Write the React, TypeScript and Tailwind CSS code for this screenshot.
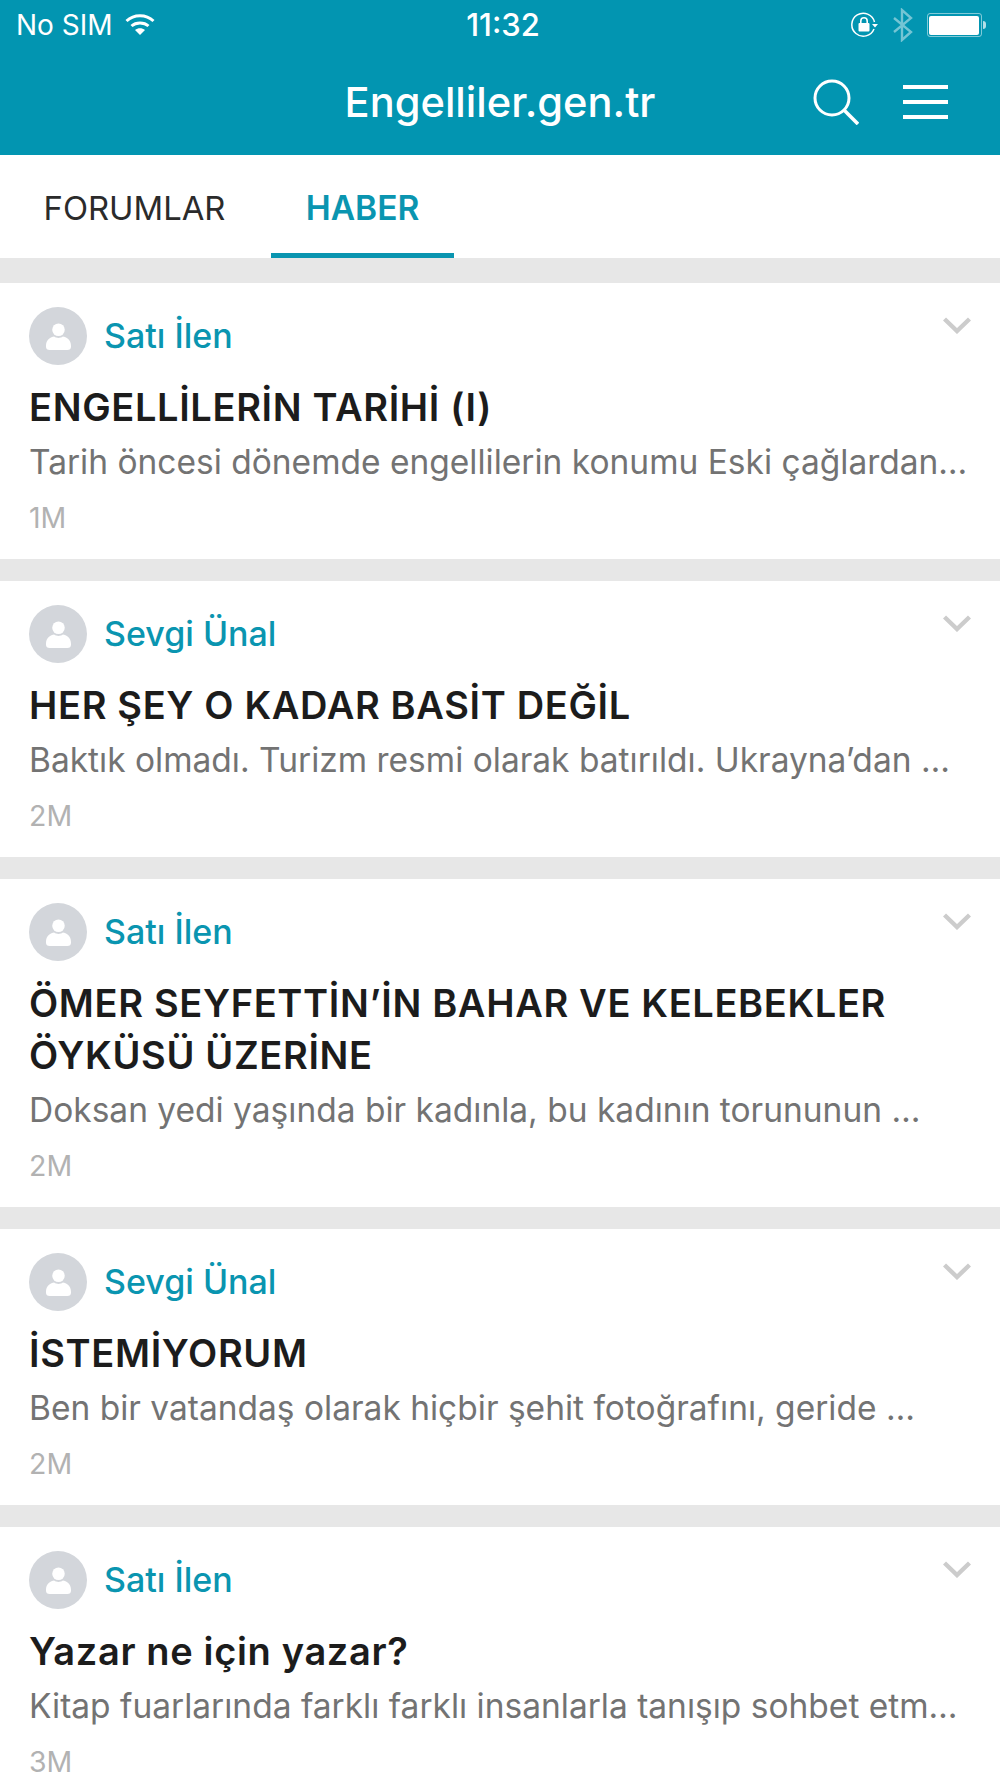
const posts = [
  { author: 'Satı İlen', title: ['ENGELLİLERİN TARİHİ (I)'], preview: 'Tarih öncesi dönemde engellilerin konumu Eski çağlardan…', time: '1M' },
  { author: 'Sevgi Ünal', title: ['HER ŞEY O KADAR BASİT DEĞİL'], preview: 'Baktık olmadı. Turizm resmi olarak batırıldı. Ukrayna’dan …', time: '2M' },
  { author: 'Satı İlen', title: ['ÖMER SEYFETTİN’İN BAHAR VE KELEBEKLER', 'ÖYKÜSÜ ÜZERİNE'], preview: 'Doksan yedi yaşında bir kadınla, bu kadının torununun …', time: '2M' },
  { author: 'Sevgi Ünal', title: ['İSTEMİYORUM'], preview: 'Ben bir vatandaş olarak hiçbir şehit fotoğrafını, geride …', time: '2M' },
  { author: 'Satı İlen', title: ['Yazar ne için yazar?'], preview: 'Kitap fuarlarında farklı farklı insanlarla tanışıp sohbet etm…', time: '3M' },
]

function Wifi() {
  return (
    <svg width="30" height="24" viewBox="0 0 30 24" fill="none" stroke="white" strokeWidth="3">
      <path d="M1.5 8 C9 1 21 1 28.5 8" />
      <path d="M6.5 13 C11 9 19 9 23.5 13" />
      <path d="M10 17 L15 22 L20 17 C17 14.5 13 14.5 10 17Z" fill="white" stroke="none" />
    </svg>
  )
}

function RotationLock() {
  return (
    <svg width="28" height="26" viewBox="0 0 28 26" fill="none" stroke="white">
      <path d="M23 17 A11.5 11.5 0 1 1 23.5 10" strokeWidth="1.5" />
      <path d="M21 12 L27 12 L24 15.5Z" fill="white" stroke="none" />
      <rect x="7.5" y="11" width="11" height="8.5" rx="1" fill="white" stroke="none" />
      <path d="M9.8 11 V9 a3.2 3.2 0 0 1 6.4 0 V11" strokeWidth="1.6" />
    </svg>
  )
}

function Bluetooth() {
  return (
    <svg width="20" height="34" viewBox="0 0 20 34" fill="none" stroke="white" strokeOpacity="0.45" strokeWidth="2.4">
      <path d="M1 10 L18 24 L9 32 V2 L18 10 L1 24" />
    </svg>
  )
}

function Battery() {
  return (
    <div className="flex items-center">
      <div className="w-[55px] h-[24px] rounded-[3px] border border-white/50 p-[1.5px]">
        <div className="w-full h-full bg-white rounded-[2px]" />
      </div>
      <div className="w-[3px] h-[8px] bg-white/70 rounded-r-sm ml-[1px]" />
    </div>
  )
}

function Avatar() {
  return (
    <div className="w-[58px] h-[58px] rounded-full bg-[#d3d6db] flex items-center justify-center">
      <svg width="27" height="29" viewBox="0 0 28 30" fill="white">
        <circle cx="14" cy="8" r="6.5" />
        <path d="M1 25 C1 18 6 15.5 9.5 15 C12 17 16 17 18.5 15 C22 15.5 27 18 27 25 Q27 29 23 29 H5 Q1 29 1 25Z" />
      </svg>
    </div>
  )
}

function PostCard({ post }: { post: (typeof posts)[number] }) {
  return (
    <article className="relative bg-white pl-[29px] pt-[24px] pb-[25px] mb-[22px]">
      <div className="flex items-center gap-[17px]">
        <Avatar />
        <span className="text-[34px] leading-[40px] font-medium text-[#0a95b0]">{post.author}</span>
      </div>
      <svg className="absolute right-[29px] top-[34px]" width="28" height="17" viewBox="0 0 28 17" fill="none" stroke="#cccccc" strokeWidth="4.4">
        <path d="M1.5 2 L14 14 L26.5 2" />
      </svg>
      <h2 className="mt-[16px] text-[38px] tracking-[0.65px] leading-[52px] font-semibold text-[#1c1c1c] whitespace-nowrap">
        {post.title.map((line) => (
          <div key={line}>{line}</div>
        ))}
      </h2>
      <p className="mt-[9px] text-[33.5px] leading-[40px] text-[#737373] whitespace-nowrap">{post.preview}</p>
      <div className="mt-[20px] text-[28.5px] leading-[32px] text-[#b2b2b2]">{post.time}</div>
    </article>
  )
}

export default function App() {
  return (
    <div className="w-[1000px] h-[1778px] overflow-hidden bg-[#e7e7e7] font-['Inter',sans-serif]">
      <header className="relative bg-[#0295b1] h-[155px] text-white">
        <div className="flex items-center justify-between h-[50px] pl-[16px] pr-[14px]">
          <div className="flex items-center gap-[12px] w-[402px]">
            <span className="text-[28px]">No SIM</span>
            <Wifi />
          </div>
          <span className="text-[31px] font-medium">11:32</span>
          <div className="flex items-center justify-end gap-[14px] w-[398px]">
            <RotationLock />
            <Bluetooth />
            <Battery />
          </div>
        </div>
        <div className="flex justify-center pt-[24px] text-[41.6px] leading-[56px] font-[550]">Engelliler.gen.tr</div>
        <div className="absolute top-[79px] right-[52px] flex items-center gap-[44px]">
          <svg width="46" height="46" viewBox="0 0 46 46" fill="none" stroke="white" strokeWidth="3">
            <circle cx="19" cy="19" r="17" />
            <path d="M31 31 L45 45" strokeWidth="3.6" />
          </svg>
          <div className="flex flex-col gap-[11px]">
            <div className="w-[45px] h-[4px] bg-white" />
            <div className="w-[45px] h-[4px] bg-white" />
            <div className="w-[45px] h-[4px] bg-white" />
          </div>
        </div>
      </header>

      <nav className="flex bg-white h-[103px] mb-[25px]">
        <div className="w-[269px] flex items-center justify-center text-[32.8px] text-[#2b2b2b] pt-[4px]">FORUMLAR</div>
        <div className="w-[183px] ml-[2px] flex items-center justify-center text-[33.5px] font-semibold text-[#0a95b0] border-b-[5px] border-[#0a95b0] pt-[9px]">
          HABER
        </div>
      </nav>

      {posts.map((post, i) => (
        <PostCard key={i} post={post} />
      ))}
    </div>
  )
}
